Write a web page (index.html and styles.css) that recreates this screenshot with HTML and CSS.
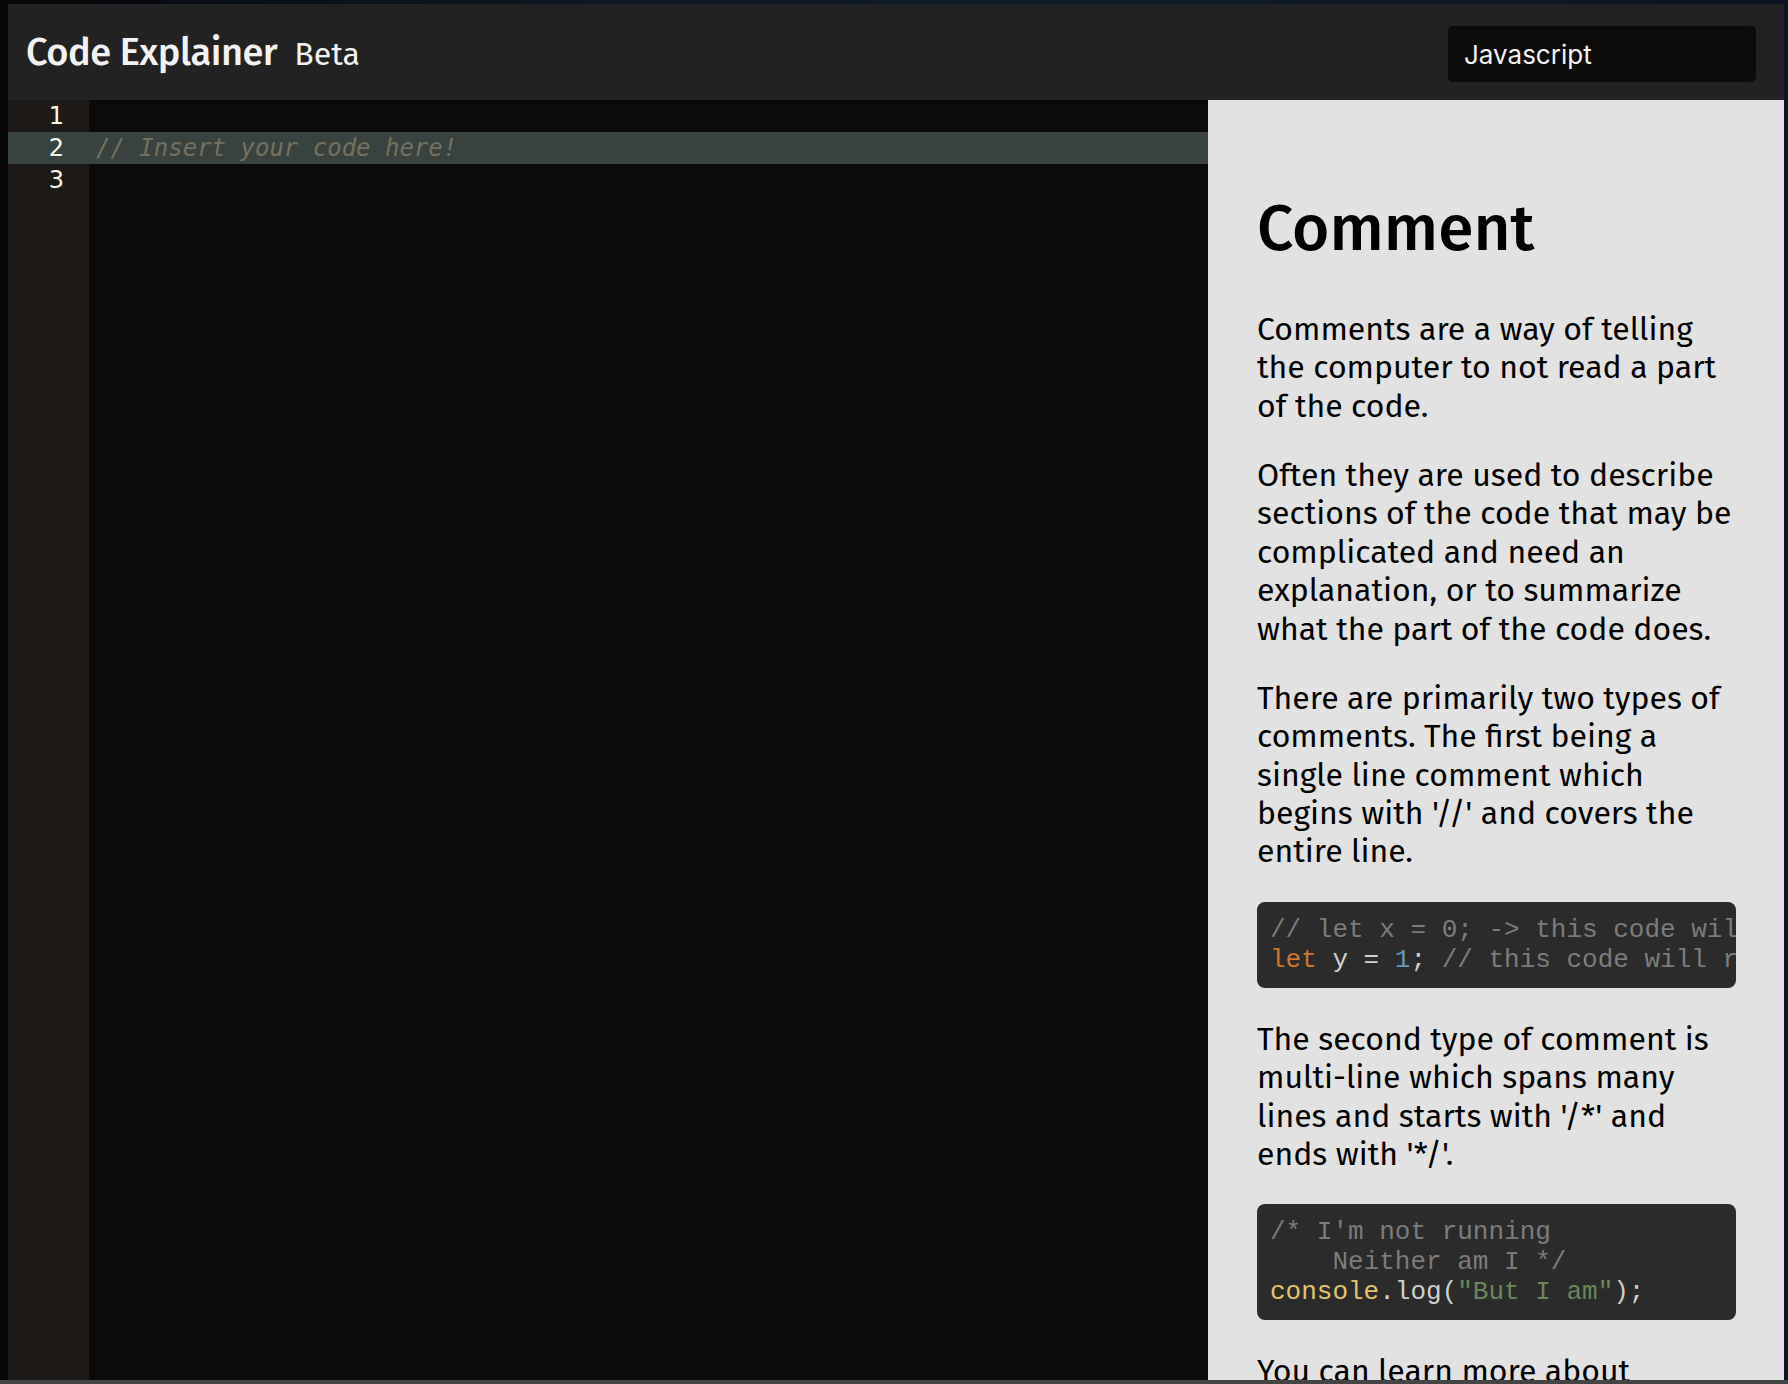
FILE: index.html
```html
<!DOCTYPE html>
<html lang="en">
<head>
<meta charset="utf-8">
<title>Code Explainer Beta</title>
<link rel="stylesheet" href="styles.css">
</head>
<body>
<div class="app">
  <header class="topbar">
    <h1 class="brand">Code Explainer <span class="beta">Beta</span></h1>
    <div class="lang-select">Javascript</div>
  </header>
  <main class="workspace">
    <section class="editor">
      <div class="row"><span class="ln">1</span><span class="code"></span></div>
      <div class="row active"><span class="ln">2</span><span class="code cm">// Insert your code here!</span></div>
      <div class="row"><span class="ln">3</span><span class="code"></span></div>
    </section>
    <aside class="explain">
      <h2 class="explain-title">Comment</h2>
      <p>Comments are a way of telling<br>the computer to not read a part<br>of the code.</p>
      <p>Often they are used to describe<br>sections of the code that may be<br>complicated and need an<br>explanation, or to summarize<br>what the part of the code does.</p>
      <p>There are primarily two types of<br>comments. The first being a<br>single line comment which<br>begins with '//' and covers the<br>entire line.</p>
      <pre class="snippet"><span class="c">// let x = 0; -&gt; this code will not run</span>
<span class="k">let</span> y = <span class="n">1</span>; <span class="c">// this code will run</span></pre>
      <p>The second type of comment is<br>multi-line which spans many<br>lines and starts with '/*' and<br>ends with '*/'.</p>
      <pre class="snippet"><span class="c">/* I'm not running
    Neither am I */</span>
<span class="b">console</span>.log(<span class="s">"But I am"</span>);</pre>
      <p>You can learn more about<br>comments on the web.</p>
    </aside>
  </main>
</div>
<div class="bottom-line"></div>
</body>
</html>
```

FILE: styles.css
```css
* { box-sizing: border-box; }

html, body {
  height: 100%;
}

body {
  margin: 0;
  display: flex;
  flex-direction: column;
  overflow: hidden;
  background: linear-gradient(90deg, #050607 0, #06080a 8px, #0b1622 30%, #0e1c2a 60%, #0a1420 100%);
  font-family: "Fira Sans", "Open Sans", sans-serif;
}

.app {
  flex: 1;
  min-height: 0;
  margin: 4px 4px 0 8px;
  display: flex;
  flex-direction: column;
}

.topbar {
  height: 96px;
  flex: none;
  background: #222222;
  display: flex;
  align-items: center;
  justify-content: space-between;
  padding: 0 28px 0 18px;
}

.brand {
  margin: 0;
  color: #f2f2f2;
  font-size: 38px;
  font-weight: 500;
  letter-spacing: -0.5px;
  line-height: 1;
}

.beta {
  font-size: 32px;
  font-weight: 400;
  margin-left: 8px;
  letter-spacing: 0;
}

.lang-select {
  width: 308px;
  height: 56px;
  margin-top: 4px;
  background: #0c0b09;
  border-radius: 5px;
  color: #f4f4f4;
  font-family: Inter, "Liberation Sans", sans-serif;
  font-size: 26px;
  display: flex;
  align-items: center;
  padding-left: 16px;
}

.workspace {
  flex: 1;
  min-height: 0;
  display: flex;
}

.editor {
  flex: 1;
  background: linear-gradient(90deg, #1e1a17 0, #1e1a17 81px, #0c0b09 81px);
}

.row {
  display: flex;
  height: 32px;
  align-items: center;
}

.row.active {
  background: #384340;
}

.ln {
  width: 81px;
  flex: none;
  text-align: right;
  padding-right: 25px;
  color: #f8f8e8;
  font-family: "DejaVu Sans", sans-serif;
  font-size: 24px;
}

.code {
  padding-left: 7px;
  font-family: "DejaVu Sans Mono", monospace;
  font-size: 24px;
  white-space: pre;
}

.cm {
  color: #75715e;
  font-style: italic;
}

.explain {
  width: 576px;
  flex: none;
  background: #e2e2e2;
  color: #000;
  padding: 48px 48px 0 49px;
  overflow: hidden;
}

.explain-title {
  font-size: 64px;
  font-weight: 500;
  line-height: 1.2;
  margin: 43px 0 42px;
  letter-spacing: 0;
}

.explain p {
  font-size: 32px;
  line-height: 1.2;
  margin: 0 0 31px;
  white-space: nowrap;
}

.snippet {
  margin: 0 0 32px;
  background: #2b2b2b;
  border-radius: 8px;
  padding: 13px 14px 13px 13px;
  font-family: "Liberation Mono", "Courier New", monospace;
  font-size: 26px;
  line-height: 30px;
  color: #d0d0d0;
  overflow: hidden;
  white-space: pre;
}

.snippet .c { color: #7c7c7c; }
.snippet .k { color: #cc7832; }
.snippet .n { color: #6897bb; }
.snippet .b { color: #e3c46b; }
.snippet .s { color: #6a8759; }

.bottom-line {
  height: 4px;
  flex: none;
  background: #454545;
}
```
